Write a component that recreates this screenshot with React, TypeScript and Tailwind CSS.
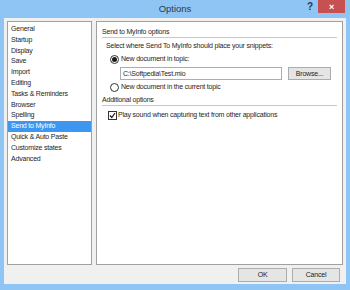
const items = [
  "General",
  "Startup",
  "Display",
  "Save",
  "Import",
  "Editing",
  "Tasks & Reminders",
  "Browser",
  "Spelling",
  "Send to MyInfo",
  "Quick & Auto Paste",
  "Customize states",
  "Advanced",
];

function Radio({ checked }: { checked?: boolean }) {
  return (
    <span className="flex h-[9px] w-[9px] items-center justify-center rounded-full border border-[#333] bg-white">
      {checked && <span className="h-[5px] w-[5px] rounded-full bg-[#1a1a1a]" />}
    </span>
  );
}

export default function App() {
  return (
    <div
      className="flex h-[290px] w-[350px] flex-col bg-[#8ec5f5] text-[7px] leading-[10px] tracking-[-0.2px] text-[#1e1e1e]"
      style={{ fontFamily: '"Liberation Sans", Arial, sans-serif' }}
    >
      <div className="relative h-[18px] shrink-0">
        <div className="pt-[3px] text-center text-[9.5px] leading-[11px] tracking-normal text-[#2b3a4a]">Options</div>
        <span className="absolute left-[307px] top-[2px] text-[10px] font-bold text-[#2b3a4a]">?</span>
        <div className="absolute left-[318px] top-0 flex h-[13px] w-[27px] items-center justify-center bg-[#c75050] text-[9px] font-bold text-white">
          ×
        </div>
      </div>

      <div className="mx-[4px] mb-[6px] flex flex-1 flex-col bg-[#f0f0f0] px-[3px] pt-[3px]">
        <div className="flex h-[244px] gap-[4px]">
          <div className="w-[85px] border border-[#a0a0a0] bg-white py-[2px]">
            {items.map((item) => (
              <div
                key={item}
                className={
                  item === "Send to MyInfo"
                    ? "h-[10.8px] bg-[#3d96ef] pl-[3px] leading-[10.8px] text-white"
                    : "h-[10.8px] pl-[3px] leading-[10.8px]"
                }
              >
                {item}
              </div>
            ))}
          </div>

          <div className="flex-1 border border-[#a0a0a0] bg-white px-[5px] pt-[5px]">
            <div className="border-b border-[#c8c8c8]">Send to MyInfo options</div>
            <div className="mt-[3px] pl-[4px]">Select where Send To MyInfo should place your snippets:</div>
            <div className="mt-[3px] flex h-[10px] items-center gap-[2px] pl-[8px]">
              <Radio checked />
              <span>New document in topic:</span>
            </div>
            <div className="mt-[3px] flex items-center gap-[6px] pl-[18px]">
              <div className="h-[13px] w-[162px] border border-[#abadb3] bg-white pl-[2px] leading-[11px]">
                C:\Softpedia\Test.mio
              </div>
              <div className="flex h-[13px] w-[43px] items-center justify-center border border-[#acacac] bg-[#e5e5e5]">
                Browse...
              </div>
            </div>
            <div className="mt-[2px] flex h-[10px] items-center gap-[2px] pl-[8px]">
              <Radio />
              <span>New document in the current topic</span>
            </div>
            <div className="mt-[3px] border-b border-[#c8c8c8]">Additional options</div>
            <div className="mt-[4px] flex h-[10px] items-center gap-[1px] pl-[6px]">
              <span className="flex h-[9px] w-[9px] items-center justify-center border border-[#333] bg-white">
                <svg width="7" height="7" viewBox="0 0 7 7">
                  <path d="M1 3.5 L2.8 5.5 L6 1" fill="none" stroke="#1a1a1a" strokeWidth="1.2" />
                </svg>
              </span>
              <span>Play sound when capturing text from other applications</span>
            </div>
          </div>
        </div>

        <div className="flex justify-end gap-[5px] pr-[3px] pt-[3px]">
          <div className="flex h-[14px] w-[49px] items-center justify-center border border-[#acacac] bg-[#e5e5e5]">
            OK
          </div>
          <div className="flex h-[14px] w-[48px] items-center justify-center border border-[#acacac] bg-[#e5e5e5]">
            Cancel
          </div>
        </div>
      </div>
    </div>
  );
}
